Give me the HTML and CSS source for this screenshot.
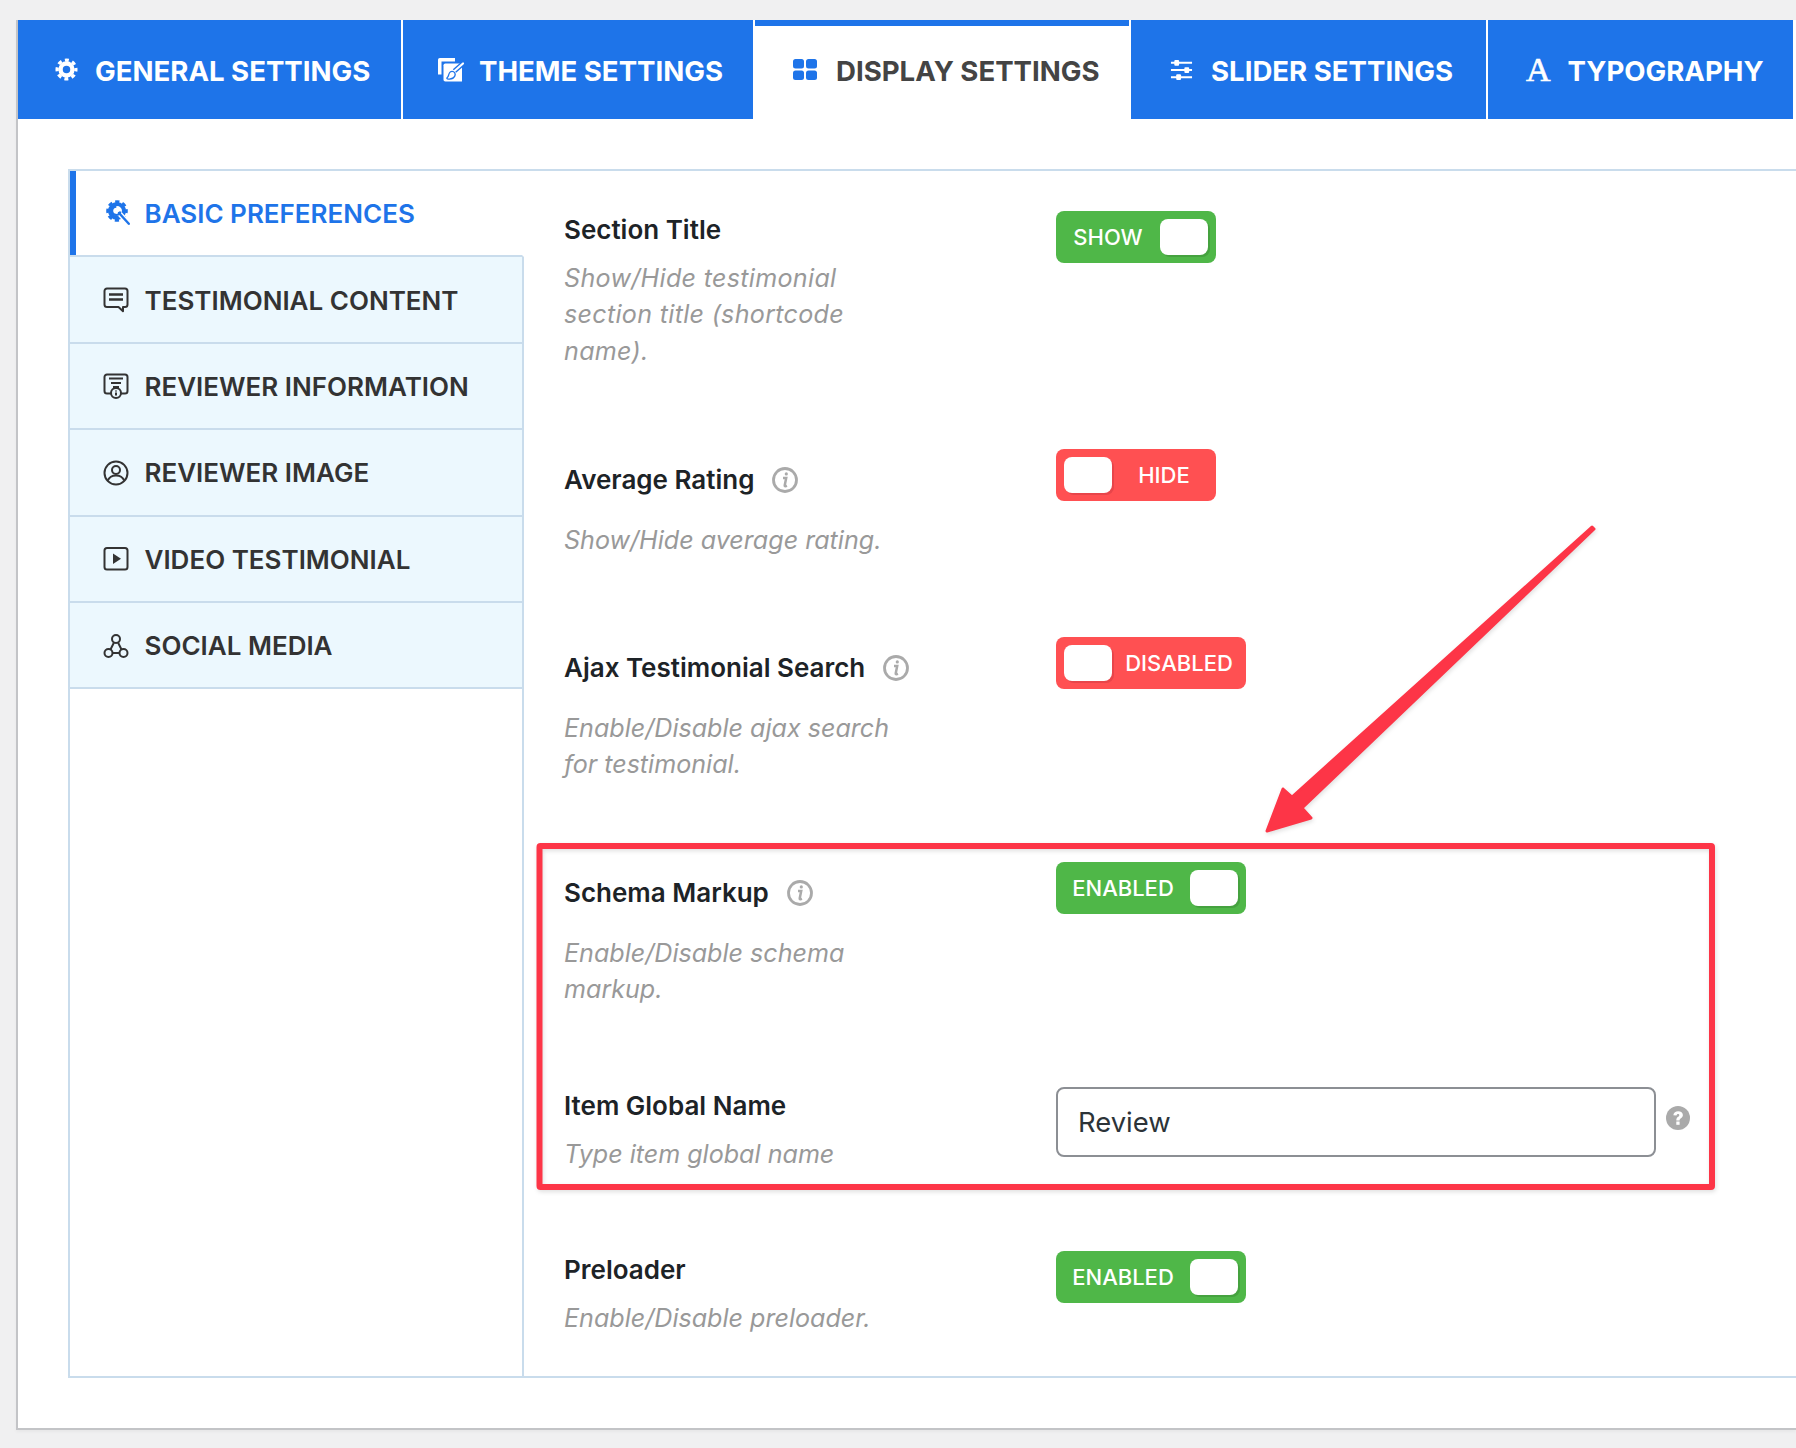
FILE: index.html
```html
<!DOCTYPE html>
<html lang="en">
<head>
<meta charset="utf-8">
<title>Display Settings</title>
<link rel="stylesheet" href="styles.css">
</head>
<body>
<div class="panel">
  <nav class="tabs">
    <a class="tab tab-general">
      <svg class="tab-icon" viewBox="0 0 24 24"><circle cx="12" cy="12" r="6.2" fill="none" stroke="currentColor" stroke-width="4.6"/><circle cx="12" cy="12" r="9.8" fill="none" stroke="currentColor" stroke-width="3.4" stroke-dasharray="4.1 3.6" stroke-dashoffset="2"/></svg>
      <span>GENERAL SETTINGS</span>
    </a>
    <a class="tab tab-theme">
      <svg class="tab-icon" viewBox="0 0 27 24"><path d="M0 16.500V1.800A1.800 1.800 0 0 1 1.800 0H17v3.500H3.500v13z" fill="#fff"/><path d="M5.500 7.300a1.800 1.800 0 0 1 1.800-1.800H24v18H7.300a1.800 1.800 0 0 1-1.800-1.800z" fill="#fff"/><path d="M25 5.500 16.500 13" stroke="#1e74e9" stroke-width="5" fill="none"/><path d="M25 5.500 16.500 13" stroke="#fff" stroke-width="2.200" fill="none" stroke-linecap="round"/><path d="M9.500 20.200c3 .6 5.600-.2 6.800-2.600.8-1.800-.4-3.600-2.200-3.600-1.700 0-2.300 1.300-2.800 3-.3 1.200-.8 2.400-1.800 3.200z" fill="#1e74e9" stroke="#1e74e9" stroke-width="2.600" stroke-linejoin="round"/><path d="M9.500 20.200c3 .6 5.600-.2 6.800-2.600.8-1.800-.4-3.600-2.200-3.600-1.700 0-2.300 1.300-2.800 3-.3 1.200-.8 2.400-1.800 3.200z" fill="#fff"/></svg>
      <span>THEME SETTINGS</span>
    </a>
    <a class="tab tab-display active">
      <svg class="tab-icon" viewBox="0 0 24 21"><rect x="0" y="0" width="11" height="9.500" rx="2.500"/><rect x="13" y="0" width="11" height="9.500" rx="2.500"/><rect x="0" y="11.500" width="11" height="9.500" rx="2.500"/><rect x="13" y="11.500" width="11" height="9.500" rx="2.500"/></svg>
      <span>DISPLAY SETTINGS</span>
    </a>
    <a class="tab tab-slider">
      <svg class="tab-icon" viewBox="0 0 24 22"><path d="M1 3.500h22M1 11h22M1 18.500h22" stroke="currentColor" stroke-width="2" fill="none"/><rect x="4.500" y="0.500" width="5" height="6" rx="1" fill="currentColor"/><rect x="15" y="8" width="5" height="6" rx="1" fill="currentColor"/><rect x="6.500" y="15.500" width="5" height="6" rx="1" fill="currentColor"/></svg>
      <span>SLIDER SETTINGS</span>
    </a>
    <a class="tab tab-type">
      <span class="type-glyph">A</span>
      <span>TYPOGRAPHY</span>
    </a>
  </nav>

  <div class="box">
    <aside class="side">
      <a class="side-item current">
        <svg class="side-icon" viewBox="0 0 28 26"><circle cx="14" cy="11" r="7" fill="none" stroke="currentColor" stroke-width="4"/><circle cx="14" cy="11" r="9.400" fill="none" stroke="currentColor" stroke-width="2.800" stroke-dasharray="4.200 3.180" stroke-dashoffset="2.100"/><path d="M15.500 12.500 26 24" stroke="#fff" stroke-width="5.200" fill="none"/><path d="M16 13 25.800 23.800" stroke="currentColor" stroke-width="2.400" fill="none" stroke-linecap="round"/><path d="M15.900 7.400a4.200 4.200 0 1 0 0 6.400" fill="none" stroke="currentColor" stroke-width="2.200" transform="rotate(-40 13.500 10.500)"/></svg>
        <span>BASIC PREFERENCES</span>
      </a>
      <a class="side-item">
        <svg class="side-icon" viewBox="0 0 26 26"><path d="M4 1.500h18A2.500 2.500 0 0 1 24.500 4v13.500A2.500 2.500 0 0 1 22 20h-2v4.200L15.500 20H4a2.500 2.500 0 0 1-2.500-2.500V4A2.500 2.500 0 0 1 4 1.500z" class="line"/><path d="M6 7.500h14M6 12.500h14" class="line thick"/></svg>
        <span>TESTIMONIAL CONTENT</span>
      </a>
      <a class="side-item">
        <svg class="side-icon" viewBox="0 0 26 26"><path d="M8 20.500H4A2.500 2.500 0 0 1 1.500 18V4A2.500 2.500 0 0 1 4 1.500h18A2.500 2.500 0 0 1 24.500 4v14a2.500 2.500 0 0 1-2.500 2.500h-4" class="line"/><path d="M6 5.500h14M8 10h10M10 14h6" class="line"/><circle cx="13" cy="20" r="5" class="line"/><path d="M13 19.500v3M13 17.600v.8" class="line"/></svg>
        <span>REVIEWER INFORMATION</span>
      </a>
      <a class="side-item">
        <svg class="side-icon" viewBox="0 0 26 26"><circle cx="13" cy="13" r="11.500" class="line"/><circle cx="13" cy="10" r="4" class="line"/><path d="M4.800 20.500c1.500-3.500 4.500-5 8.200-5s6.700 1.500 8.200 5" class="line"/></svg>
        <span>REVIEWER IMAGE</span>
      </a>
      <a class="side-item">
        <svg class="side-icon" viewBox="0 0 26 26"><rect x="1.500" y="2" width="23" height="21.500" rx="2.500" class="line"/><path d="M10 7.500l8 5.200-8 5.300z" fill="currentColor"/></svg>
        <span>VIDEO TESTIMONIAL</span>
      </a>
      <a class="side-item">
        <svg class="side-icon" viewBox="0 0 26 26"><circle cx="13" cy="6" r="4" class="line"/><circle cx="5.500" cy="20" r="4" class="line"/><circle cx="20.500" cy="20" r="4" class="line"/><path d="M11 9.500l-3.500 7M15 9.500l3.500 7M9.500 20h7" class="line"/></svg>
        <span>SOCIAL MEDIA</span>
      </a>
      <div class="side-rest"></div>
    </aside>

    <section class="fields">
      <div class="row row-title">
        <div class="info">
          <div class="label">Section Title</div>
          <p class="desc">Show/Hide testimonial section title (shortcode name).</p>
        </div>
        <div class="toggle on narrow"><span class="toggle-text">SHOW</span><span class="knob"></span></div>
      </div>

      <div class="row row-rating">
        <div class="info">
          <div class="label has-tip">Average Rating
            <svg class="tip" viewBox="0 0 26 26"><circle cx="13" cy="13" r="11.500" fill="none" stroke="#aaa" stroke-width="2.800"/><path d="M11 11h3.200l-1.500 7.500c-.1.800.6 1 2.300.4" fill="none" stroke="#aaa" stroke-width="2.500"/><circle cx="14.300" cy="6.900" r="1.600" fill="#aaa"/></svg>
          </div>
          <p class="desc">Show/Hide average rating.</p>
        </div>
        <div class="toggle off narrow"><span class="knob"></span><span class="toggle-text">HIDE</span></div>
      </div>

      <div class="row row-ajax">
        <div class="info">
          <div class="label has-tip">Ajax Testimonial Search
            <svg class="tip" viewBox="0 0 26 26"><circle cx="13" cy="13" r="11.500" fill="none" stroke="#aaa" stroke-width="2.800"/><path d="M11 11h3.200l-1.500 7.500c-.1.800.6 1 2.300.4" fill="none" stroke="#aaa" stroke-width="2.500"/><circle cx="14.300" cy="6.900" r="1.600" fill="#aaa"/></svg>
          </div>
          <p class="desc">Enable/Disable ajax search for testimonial.</p>
        </div>
        <div class="toggle off wide"><span class="knob"></span><span class="toggle-text">DISABLED</span></div>
      </div>

      <div class="row row-schema">
        <div class="info">
          <div class="label has-tip">Schema Markup
            <svg class="tip" viewBox="0 0 26 26"><circle cx="13" cy="13" r="11.500" fill="none" stroke="#aaa" stroke-width="2.800"/><path d="M11 11h3.200l-1.500 7.500c-.1.800.6 1 2.300.4" fill="none" stroke="#aaa" stroke-width="2.500"/><circle cx="14.300" cy="6.900" r="1.600" fill="#aaa"/></svg>
          </div>
          <p class="desc">Enable/Disable schema markup.</p>
        </div>
        <div class="toggle on wide"><span class="toggle-text">ENABLED</span><span class="knob"></span></div>
      </div>

      <div class="row row-item">
        <div class="info">
          <div class="label">Item Global Name</div>
          <p class="desc">Type item global name</p>
        </div>
        <div class="input-wrap">
          <input class="text-input" type="text" value="Review">
          <svg class="help" viewBox="0 0 24 24"><circle cx="12" cy="12" r="12" fill="#aaa"/><path d="M7.300 9.200c.4-2.600 2.300-4 4.900-4 2.700 0 4.700 1.600 4.700 3.900 0 3.100-3.300 3-3.300 5.300H10.300c0-3.800 3-3.500 3-5.200 0-.9-.5-1.300-1.300-1.300s-1.300.5-1.600 1.700z" fill="#fff"/><rect x="10.300" y="15.500" width="3.300" height="3.300" fill="#fff"/></svg>
        </div>
      </div>

      <div class="row row-preloader">
        <div class="info">
          <div class="label">Preloader</div>
          <p class="desc">Enable/Disable preloader.</p>
        </div>
        <div class="toggle on wide"><span class="toggle-text">ENABLED</span><span class="knob"></span></div>
      </div>
    </section>
  </div>
</div>

<svg class="annotation" viewBox="0 0 1796 1448" aria-hidden="true">
  <rect x="539.500" y="846" width="1172.500" height="341" rx="1"/>
  <polygon points="1592,527 1594,529 1302,808 1311,818 1267,831 1283,789 1292,797"/>
</svg>
</body>
</html>
```

FILE: styles.css
```css
* { box-sizing: border-box; }
html, body { margin: 0; padding: 0; }
body {
  position: relative;
  width: 1796px;
  height: 1448px;
  overflow: hidden;
  background: #f0f0f1;
  font-family: Inter, "Noto Sans", sans-serif;
  color: #1d2327;
}
.panel {
  margin: 20px 0 0 16px;
  background: #fff;
  border-left: 2px solid #c3c4c7;
  border-bottom: 2px solid #c3c4c7;
  box-shadow: 0 2px 3px rgba(0, 0, 0, .04);
}

/* tabs */
.tabs { display: flex; gap: 2px; height: 99px; }
.tab {
  display: flex;
  align-items: center;
  background: #1e74e9;
  color: #fff;
  font-size: 27.6px;
  font-weight: 700;
  white-space: nowrap;
}
.tab > span { padding-top: 2px; }
.tab-icon { flex: none; fill: currentColor; }
.tab-general { width: 383px; padding-left: 37px; gap: 17px; }
.tab-general .tab-icon { width: 23px; height: 23px; }
.tab-theme { width: 350px; padding-left: 35px; gap: 14px; }
.tab-theme .tab-icon { width: 27px; height: 24px; }
.tab-display { width: 374px; padding-left: 38px; gap: 19px; }
.tab-display .tab-icon { width: 24px; height: 21px; }
.tab-slider { width: 355px; padding-left: 39px; gap: 18px; }
.tab-slider .tab-icon { width: 23px; height: 22px; }
.tab-type { width: 305px; padding-left: 38px; gap: 17px; }
.tab.active { background: #fff; color: #444; box-shadow: inset 0 6px 0 #1e74e9; }
.tab.active .tab-icon { fill: #1e74e9; }
.tab > .type-glyph {
  padding-top: 0;
  font-family: "Liberation Serif", serif;
  font-size: 34px;
  font-weight: 400;
  line-height: 1;
  -webkit-text-stroke: .6px #fff;
}

/* main box */
.box {
  display: flex;
  margin: 50px 0 50px 50px;
  height: 1209px;
  border: 2px solid #c9dcec;
  border-right: 0;
}

/* side nav */
.side { flex: none; width: 454px; display: flex; flex-direction: column; }
.side-item {
  flex: none;
  height: 86.4px;
  display: flex;
  align-items: center;
  gap: 15.5px;
  padding-left: 33px;
  padding-top: 1px;
  background: #ecf8fe;
  border-right: 2px solid #c9dcec;
  border-bottom: 2px solid #c9dcec;
  color: #333;
  font-size: 26px;
  font-weight: 600;
  white-space: nowrap;
}
.side-item.current {
  background: #fff;
  color: #1e74e9;
  border-right-color: transparent;
  box-shadow: inset 6px 0 0 #1e74e9;
  padding-top: 0;
}
.side-icon { flex: none; width: 26px; height: 26px; }
.side-item.current .side-icon { width: 28px; margin-right: -2px; }
.line { fill: none; stroke: currentColor; stroke-width: 2; stroke-linejoin: round; }
.thick { stroke-width: 2.4; }
.side-rest { flex: 1; border-right: 2px solid #c9dcec; }

/* settings */
.fields { flex: 1; padding: 40px 0 0 40px; }
.row { display: flex; align-items: flex-start; }
.row-title { height: 238px; }
.row-rating { height: 188px; }
.row-ajax { height: 225px; }
.row-schema { height: 225px; }
.row-item { height: 164px; }
.info { flex: none; width: 492px; }
.label { padding-top: 1px; font-size: 26px; font-weight: 600; line-height: 36px; color: #1d2327; }
.label.has-tip {
  display: flex;
  align-items: center;
  gap: 18px;
  padding-top: 13px;
  margin-bottom: 24px;
}
.tip { flex: none; width: 26px; height: 26px; }
.desc {
  width: 345px;
  margin: 12px 0 0;
  font-size: 25.1px;
  font-style: italic;
  line-height: 36.4px;
  color: #999;
}
.label.has-tip + .desc { margin-top: 0; }
.row-title .desc { letter-spacing: .3px; }

/* toggles */
.toggle {
  display: flex;
  align-items: center;
  height: 52px;
  padding: 0 8px;
  border-radius: 8px;
  color: #fff;
  font-size: 22px;
  font-weight: 500;
}
.toggle.narrow { width: 160px; }
.toggle.wide { width: 190px; }
.toggle.on { background: #4fb748; padding-right: 8px; }
.toggle.off { background: #ff5052; }
.toggle-text { flex: 1; text-align: center; white-space: nowrap; }
.toggle.on .toggle-text { margin-left: -8px; }
.toggle.off .toggle-text { margin-right: -8px; }
.knob { flex: none; width: 48px; height: 36px; border-radius: 8px; background: #fff; }
.toggle.on .knob { box-shadow: 2px 2px 0 #45a23f; }
.toggle.off .knob { box-shadow: 2px 2px 0 #e8454a; }

/* input */
.input-wrap { display: flex; align-items: flex-start; gap: 10px; }
.text-input {
  width: 600px;
  height: 70px;
  padding: 0 20px;
  border: 2px solid #8c8f94;
  border-radius: 8px;
  background: #fff;
  color: #2c3338;
  font-family: inherit;
  font-size: 27.4px;
}
.help { flex: none; width: 24px; height: 24px; margin-top: 19px; }

/* annotation drawn on top of the page */
.annotation {
  position: absolute;
  top: 0;
  left: 0;
  width: 1796px;
  height: 1448px;
  pointer-events: none;
  filter: drop-shadow(1px 2px 2px rgba(0, 0, 0, .12));
}
.annotation rect { fill: none; stroke: #fd3547; stroke-width: 6; }
.annotation polygon { fill: #fd3547; stroke: #fd3547; stroke-width: 3; stroke-linejoin: round; }
```
